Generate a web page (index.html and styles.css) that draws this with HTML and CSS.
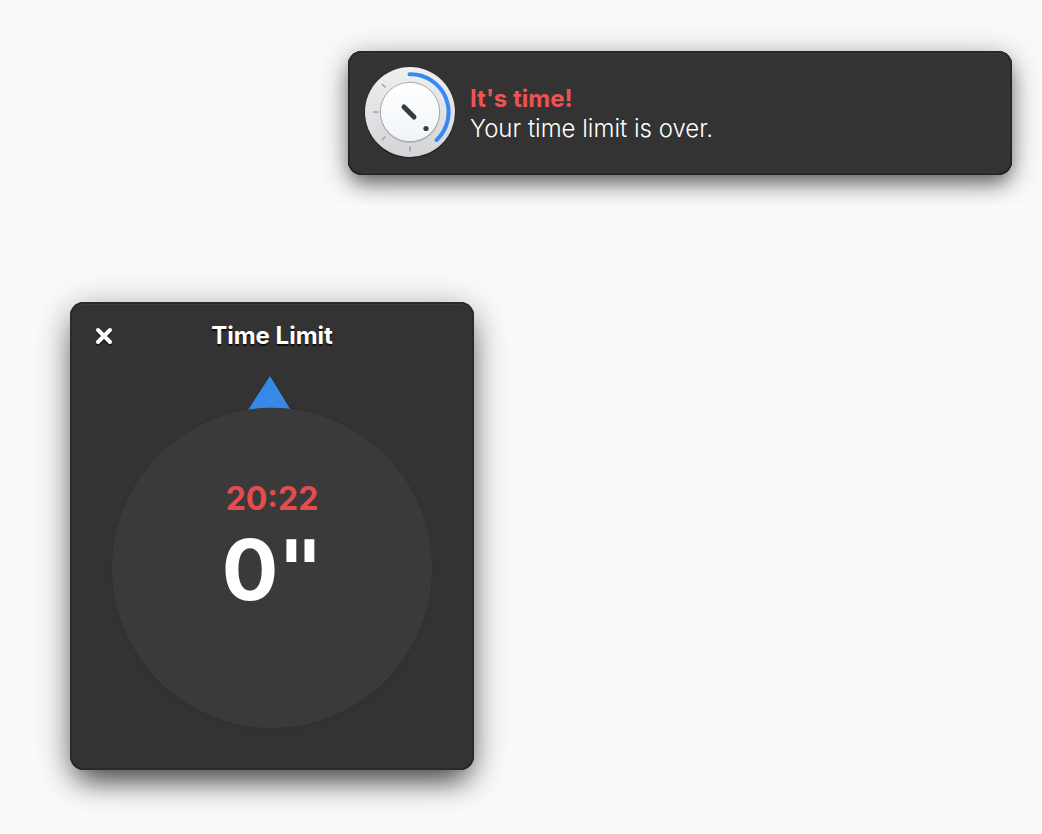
FILE: index.html
```html
<!DOCTYPE html>
<html lang="en">
<head>
<meta charset="utf-8">
<title>Time Limit</title>
<link rel="stylesheet" href="styles.css">
</head>
<body>
<div class="notification-area">
  <section class="surface notification" role="alert">
    <svg class="app-icon" viewBox="0 0 96 96" aria-hidden="true">
      <defs>
        <linearGradient id="ring" x1="0" y1="0" x2="0" y2="1"><stop offset="0" stop-color="#f0f0f0"/><stop offset="1" stop-color="#d5d3d7"/></linearGradient>
        <linearGradient id="knob" x1="0" y1="0" x2="0" y2="1"><stop offset="0" stop-color="#ffffff"/><stop offset="1" stop-color="#f0f4f8"/></linearGradient>
      </defs>
      <circle cx="48" cy="49" r="45.5" fill="#1d1d1d" opacity=".6"/>
      <circle cx="48" cy="48" r="45" fill="url(#ring)"/>
      <g stroke="#95a3ab" stroke-width="1.5">
        <path d="M48 82.500v5M11 48h5.500M20 20l3.500 3.500M20 76l3.500-3.500"/>
      </g>
      <circle cx="48" cy="49" r="30" fill="#8f9599" opacity=".5"/>
      <circle cx="48" cy="48" r="29.700" fill="url(#knob)" stroke="#a5a9ac" stroke-width="1"/>
      <path d="M47.500 10.200A38 38 0 0 1 74.500 76" fill="none" stroke="#3689f5" stroke-width="4" stroke-linecap="round"/>
      <path d="M42 43l10 10" stroke="#333c42" stroke-width="5" stroke-linecap="round"/>
      <circle cx="64" cy="64.500" r="2.600" fill="#333c42"/>
    </svg>
    <div class="message">
      <h2 class="message-title">It's time!</h2>
      <p class="message-body">Your time limit is over.</p>
    </div>
  </section>
</div>
<main class="desktop">
  <section class="surface window">
    <header class="titlebar">
      <button class="close" type="button" aria-label="Close">
        <svg class="close-icon" viewBox="0 0 20 20" aria-hidden="true"><path d="M4 4l12 12M16 4L4 16"/></svg>
      </button>
      <h1 class="title">Time Limit</h1>
    </header>
    <div class="timer">
      <svg class="pointer" viewBox="0 0 42 34" aria-hidden="true"><path d="M22 0L42 33Q20 30 0 34z" fill="#3689e6"/></svg>
      <div class="dial">
        <time class="end-time">20:22</time>
        <strong class="remaining">0<span class="unit">"</span></strong>
      </div>
    </div>
  </section>
</main>
</body>
</html>
```
FILE: styles.css
```css
* {
  box-sizing: border-box;
}

body {
  margin: 0;
  background: #fafafa;
  color: #fff;
  font-family: Inter, "Open Sans", sans-serif;
}

h1, h2, p {
  margin: 0;
}

.surface {
  background: #333;
  border-radius: 14px;
}

.notification-area {
  padding: 51px 30px 30px 348px;
  overflow: hidden;
}

.notification {
  display: flex;
  align-items: center;
  gap: 12px;
  padding: 13px 14px 15px;
  box-shadow: inset 0 0 0 2px #262626, inset 0 -2px 0 #1b1b1b, inset 0 2px 0 1px #3d3d3d, inset 0 0 0 3px #393939, 0 10px 18px -3px rgba(0, 0, 0, .45), 0 6px 32px rgba(0, 0, 0, .35);
}

.app-icon {
  width: 96px;
  height: 96px;
  flex: none;
}

.message {
  padding-top: 4px;
  font-size: 24px;
  line-height: 30px;
}

.message-title {
  color: #ed5353;
  font-size: 24px;
  font-weight: 700;
}

.message-body {
  font-weight: 350;
}

.desktop {
  padding: 97px 70px 64px;
}

.window {
  width: 404px;
  padding-bottom: 42px;
  box-shadow: inset 0 0 0 2px #2a2a2a, inset 0 -2px 0 #181818, inset 0 2px 0 1px #3d3d3d, 0 18px 28px -10px rgba(0, 0, 0, .6), 0 8px 36px rgba(0, 0, 0, .4);
}

.titlebar {
  display: grid;
  grid-template-columns: 48px 1fr 48px;
  align-items: center;
  height: 68px;
  padding: 0 10px;
}

.close {
  display: grid;
  place-items: center;
  width: 48px;
  height: 48px;
  padding: 0;
  border: 0;
  background: none;
}

.close-icon {
  width: 20px;
  height: 20px;
  fill: none;
  stroke: #fff;
  stroke-width: 4;
  stroke-linecap: round;
  filter: drop-shadow(0 2px 0 #1c1c1c);
}

.title {
  font-size: 24px;
  font-weight: 700;
  line-height: 30px;
  text-align: center;
  text-shadow: 0 2px 1px #111;
}

.timer {
  display: flex;
  flex-direction: column;
  align-items: center;
  padding-top: 6px;
}

.pointer {
  width: 42px;
  height: 34px;
  margin: 0 6px -2px 0;
}

.dial {
  display: flex;
  flex-direction: column;
  align-items: center;
  width: 320px;
  height: 320px;
  padding-top: 70px;
  border-radius: 50%;
  background: #3a3a3a;
  box-shadow: 0 2px 6px rgba(0, 0, 0, .06);
  z-index: 1;
}

.end-time {
  color: #e64b4e;
  font-size: 32px;
  font-weight: 700;
  line-height: 42px;
}

.remaining {
  font-size: 84px;
  font-weight: 700;
  line-height: 100px;
}

.unit {
  font-family: "DejaVu Sans", Inter, sans-serif;
}
```
